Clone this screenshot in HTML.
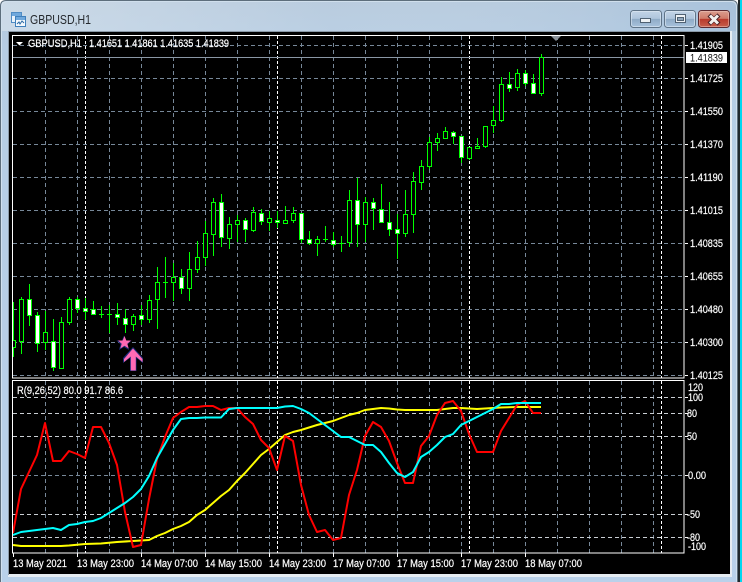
<!DOCTYPE html>
<html>
<head>
<meta charset="utf-8">
<title>GBPUSD,H1</title>
<style>
html,body{margin:0;padding:0;background:#fff;width:742px;height:582px;overflow:hidden}
svg{display:block}
text{font-family:"Liberation Sans",sans-serif;font-size:11px;fill:#fff;stroke:#fff;stroke-width:.2}
</style>
</head>
<body>
<svg width="742" height="582" viewBox="0 0 742 582" xmlns="http://www.w3.org/2000/svg">
<defs>
<linearGradient id="win" x1="0" y1="0" x2="0" y2="1"><stop offset="0" stop-color="#b4c8dc"/><stop offset=".08" stop-color="#b6cde4"/><stop offset="1" stop-color="#b9d1ea"/></linearGradient>
<linearGradient id="sheen" x1="0" y1="0" x2="1" y2="0"><stop offset="0" stop-color="#dfe8ef" stop-opacity=".55"/><stop offset=".45" stop-color="#dfe8ef" stop-opacity=".12"/><stop offset="1" stop-color="#9dbbd8" stop-opacity=".5"/></linearGradient>
<linearGradient id="btn" x1="0" y1="0" x2="0" y2="1"><stop offset="0" stop-color="#c3d5e7"/><stop offset=".48" stop-color="#aec5dc"/><stop offset=".5" stop-color="#8fabc6"/><stop offset="1" stop-color="#a9c4de"/></linearGradient>
<linearGradient id="cls" x1="0" y1="0" x2="0" y2="1"><stop offset="0" stop-color="#dba091"/><stop offset=".48" stop-color="#cf7a68"/><stop offset=".5" stop-color="#b8392b"/><stop offset="1" stop-color="#c8604d"/></linearGradient>
<clipPath id="mainclip"><rect x="13" y="36" width="671" height="342"/></clipPath>
</defs>

<!-- window chrome -->
<rect x="739" y="0" width="3" height="582" fill="#00d8f0"/>
<rect x="738" y="0" width="2" height="582" fill="#20282c"/>
<path d="M0 582V6Q0 1 6 1H732Q738 1 738 7V582Z" fill="url(#win)"/>
<rect x="2" y="2" width="734" height="29" fill="url(#sheen)"/>
<path d="M.5 582V6Q.5 .5 6 .5H732Q737.5 .5 737.5 7V582" fill="none" stroke="#5d6e7c"/>
<path d="M1.5 582V7Q1.5 1.5 7 1.5H731Q736.5 1.5 736.5 7V582" fill="none" stroke="#dce8f2" stroke-opacity=".7"/>
<rect x="8" y="31" width="724" height="546" fill="#e6ecf2"/>
<rect x="8" y="31" width="722" height="1" fill="#8b9aa8"/>
<rect x="8" y="31" width="1" height="544" fill="#8b9aa8"/>
<rect x="9" y="32" width="721" height="542" fill="#000"/>

<!-- title icon -->
<rect x="11.500" y="12.500" width="10" height="10" fill="#eaf3fb" stroke="#4f8cc4"/>
<rect x="12" y="13" width="9" height="3" fill="#6fa8dc"/>
<rect x="15.500" y="16.500" width="10" height="10" fill="#f4f9fd" stroke="#3f7fbb"/>
<rect x="16" y="17" width="9" height="3" fill="#6fa8dc"/>
<path d="M17 24l2-2 1 2 2-3 2 2" fill="none" stroke="#2c6aa4"/>
<text x="30" y="24" textLength="61" lengthAdjust="spacingAndGlyphs" style="font-size:13px;fill:#25292e;stroke:none">GBPUSD,H1</text>

<!-- window buttons -->
<rect x="630.500" y="10.500" width="31" height="17" rx="3" fill="url(#btn)" stroke="#5f7488"/>
<rect x="631.500" y="11.500" width="29" height="15" rx="2" fill="none" stroke="#e4edf5" stroke-opacity=".55"/>
<rect x="640.500" y="18.500" width="10" height="4" fill="#eef2f5" stroke="#4f6172"/>
<rect x="664.500" y="10.500" width="31" height="17" rx="3" fill="url(#btn)" stroke="#5f7488"/>
<rect x="665.500" y="11.500" width="29" height="15" rx="2" fill="none" stroke="#e4edf5" stroke-opacity=".55"/>
<rect x="675.500" y="14.500" width="10" height="8" fill="#eef2f5" stroke="#4f6172"/>
<rect x="677.500" y="17.500" width="6" height="3" fill="#8fa6bc" stroke="#4f6172"/>
<rect x="698.500" y="10.500" width="31" height="17" rx="3" fill="url(#cls)" stroke="#5c2a30"/>
<rect x="699.500" y="11.500" width="29" height="15" rx="2" fill="none" stroke="#efc9bf" stroke-opacity=".5"/>
<path d="M709 15l10 9M719 15l-10 9" fill="none" stroke="#4a2226" stroke-width="4.500"/>
<path d="M710 15.500l8 8M718 15.500l-8 8" fill="none" stroke="#f3f1ef" stroke-width="3"/>

<!-- main grid -->
<g fill="none" stroke="#778899" stroke-dasharray="4 3" shape-rendering="crispEdges">
<path d="M13 45.500H684M13 78.500H684M13 111.500H684M13 144.500H684M13 177.500H684M13 210.500H684M13 243.500H684M13 276.500H684M13 309.500H684M13 342.500H684M13 375.500H684"/>
<path d="M45.500 36V378M77.500 36V378M109.500 36V378M141.500 36V378M173.500 36V378M205.500 36V378M237.500 36V378M301.500 36V378M333.500 36V378M365.500 36V378M397.500 36V378M429.500 36V378M493.500 36V378M525.500 36V378M557.500 36V378M589.500 36V378M621.500 36V378M653.500 36V378M269.500 36V378M461.500 36V378"/>
<path d="M45.500 381V553M77.500 381V553M109.500 381V553M141.500 381V553M173.500 381V553M205.500 381V553M237.500 381V553M301.500 381V553M333.500 381V553M365.500 381V553M397.500 381V553M429.500 381V553M493.500 381V553M525.500 381V553M557.500 381V553M589.500 381V553M621.500 381V553M653.500 381V553M269.500 381V553M461.500 381V553"/>
<path d="M13 475.500H684"/>
</g>
<g fill="none" shape-rendering="crispEdges">
<path stroke="#fff" stroke-dasharray="3 2" d="M85.500 36V378M277.500 36V378M469.500 36V378M661.500 36V378M85.500 381V553M277.500 381V553M469.500 381V553M661.500 381V553"/>
<path stroke="#c9ced3" stroke-dasharray="4 3" d="M13 397.500H684M13 413.500H684M13 436.500H684M13 514.500H684M13 537.500H684"/>
<path stroke="#8a97a5" d="M13 57.500H684"/>
</g>

<!-- candles -->
<g clip-path="url(#mainclip)">
<path fill="none" stroke="#00ff00" d="M13.500 302V357M21.500 297V354M29.500 284V326M37.500 312V352M45.500 311V350M53.500 319V371M61.500 317V369M69.500 297V325M77.500 297V313M85.500 298V320M93.500 301V315M101.500 306V318M99 314.500h5M109.500 305V333M107 314.500h5M117.500 303V325M125.500 309V333M133.500 314V331M141.500 305V325M149.500 295V323M157.500 267V329M165.500 257V298M163 282.500h5M173.500 263V301M181.500 269V294M189.500 252V301M197.500 241V273M205.500 221V266M213.500 198V256M221.500 194V247M229.500 217V249M237.500 215V242M245.500 218V242M253.500 207V232M261.500 209V225M269.500 211V231M277.500 211V228M285.500 206V223M293.500 207V223M301.500 213V243M309.500 231V245M317.500 236V256M325.500 226V242M323 239.500h5M333.500 232V247M341.500 236V252M339 243.500h5M349.500 190V247M357.500 178V247M365.500 197V242M373.500 198V230M381.500 184V223M389.500 202V236M397.500 214V259M405.500 190V237M413.500 172V233M421.500 160V190M429.500 137V169M437.500 133V151M445.500 127V139M453.500 131V144M461.500 136V163M469.500 147V160M477.500 138V149M485.500 126V148M493.500 106V133M501.500 77V122M509.500 72V92M517.500 69V91M525.500 70V86M533.500 74V93M541.500 54V96"/>
<g fill="#000" stroke="#00ff00">
<rect x="11.500" y="340.500" width="4" height="7"/>
<rect x="19.500" y="299.500" width="4" height="42"/>
<rect x="43.500" y="332.500" width="4" height="10"/>
<rect x="59.500" y="322.500" width="4" height="46"/>
<rect x="67.500" y="299.500" width="4" height="23"/>
<rect x="131.500" y="316.500" width="4" height="8"/>
<rect x="147.500" y="300.500" width="4" height="19"/>
<rect x="155.500" y="282.500" width="4" height="17"/>
<rect x="171.500" y="277.500" width="4" height="5"/>
<rect x="187.500" y="269.500" width="4" height="19"/>
<rect x="195.500" y="257.500" width="4" height="12"/>
<rect x="203.500" y="233.500" width="4" height="24"/>
<rect x="211.500" y="202.500" width="4" height="32"/>
<rect x="227.500" y="224.500" width="4" height="14"/>
<rect x="235.500" y="220.500" width="4" height="4"/>
<rect x="251.500" y="212.500" width="4" height="18"/>
<rect x="267.500" y="218.500" width="4" height="4"/>
<rect x="283.500" y="220.500" width="4" height="3"/>
<rect x="291.500" y="213.500" width="4" height="7"/>
<rect x="315.500" y="239.500" width="4" height="4"/>
<rect x="347.500" y="200.500" width="4" height="42"/>
<rect x="363.500" y="202.500" width="4" height="22"/>
<rect x="403.500" y="214.500" width="4" height="19"/>
<rect x="411.500" y="181.500" width="4" height="33"/>
<rect x="419.500" y="166.500" width="4" height="16"/>
<rect x="427.500" y="142.500" width="4" height="24"/>
<rect x="435.500" y="138.500" width="4" height="4"/>
<rect x="443.500" y="131.500" width="4" height="7"/>
<rect x="467.500" y="147.500" width="4" height="11"/>
<rect x="475.500" y="146.500" width="4" height="2"/>
<rect x="483.500" y="126.500" width="4" height="20"/>
<rect x="491.500" y="120.500" width="4" height="5"/>
<rect x="499.500" y="84.500" width="4" height="36"/>
<rect x="515.500" y="73.500" width="4" height="14"/>
<rect x="539.500" y="57.500" width="4" height="36"/>
</g>
<g fill="#fff" stroke="#00ff00">
<rect x="27.500" y="299.500" width="4" height="16"/>
<rect x="35.500" y="315.500" width="4" height="28"/>
<rect x="51.500" y="341.500" width="4" height="26"/>
<rect x="75.500" y="299.500" width="4" height="9"/>
<rect x="83.500" y="308.500" width="4" height="3"/>
<rect x="91.500" y="309.500" width="4" height="5"/>
<rect x="115.500" y="314.500" width="4" height="3"/>
<rect x="123.500" y="318.500" width="4" height="6"/>
<rect x="139.500" y="315.500" width="4" height="4"/>
<rect x="179.500" y="277.500" width="4" height="11"/>
<rect x="219.500" y="202.500" width="4" height="35"/>
<rect x="243.500" y="220.500" width="4" height="9"/>
<rect x="259.500" y="213.500" width="4" height="8"/>
<rect x="275.500" y="220.500" width="4" height="2"/>
<rect x="299.500" y="213.500" width="4" height="26"/>
<rect x="307.500" y="239.500" width="4" height="4"/>
<rect x="331.500" y="240.500" width="4" height="4"/>
<rect x="355.500" y="200.500" width="4" height="24"/>
<rect x="371.500" y="202.500" width="4" height="6"/>
<rect x="379.500" y="209.500" width="4" height="13"/>
<rect x="387.500" y="222.500" width="4" height="7"/>
<rect x="395.500" y="229.500" width="4" height="4"/>
<rect x="451.500" y="132.500" width="4" height="4"/>
<rect x="459.500" y="136.500" width="4" height="21"/>
<rect x="507.500" y="84.500" width="4" height="4"/>
<rect x="523.500" y="73.500" width="4" height="10"/>
<rect x="531.500" y="83.500" width="4" height="10"/>
</g>
</g>

<!-- star and arrow -->
<polygon points="124.500,335 126.500,340 132,340 128,344 129.500,349.500 124.500,346.500 119.500,349.500 121,344 117,340 122.500,340" fill="#1c2a78" transform="translate(-.5 .5)"/>
<polygon points="124.500,336 126.300,340.500 131,340.500 127.300,343.700 128.700,348.500 124.500,345.800 120.300,348.500 121.700,343.700 118,340.500 122.700,340.500" fill="#ff69b4"/>
<polygon points="133,347 143,358 143,363 136.500,358 136.500,371 130,371 130,358 123,363 123,358" fill="#1c2a78"/>
<polygon points="133,348.500 142.500,359 142.500,362 135.800,356.500 135.800,370.500 130.800,370.500 130.800,356.500 124,362 124,359" fill="#ff69b4"/>

<!-- top marker -->
<polygon points="551,36 561,36 556,41" fill="#8a929a"/>

<!-- indicator lines -->
<g fill="none" stroke-width="2" stroke-linejoin="round">
<polyline stroke="#ffff00" points="13,545 21,546 61,546 69,545.500 85,544 101,543.500 117,542 133,541 149,540 157,536 165,533 173,529 181,526 189,522 197,515 205,510 213,503 221,496 229,490 237,481 245,473 253,464 261,455 269,449 277,442 285,435 293,432 301,430 309,427.500 317,425 325,423 333,421 341,418 349,415 357,413 365,410 373,409 381,408 389,408.500 397,409.500 405,410 437,410 445,409 453,408 461,408 469,408.500 477,409 485,408.500 493,408 501,407.500 517,407 541,407"/>
<polyline stroke="#ff0000" points="13,533 21,489 29,472 37,455 45,423 53,461 61,461 69,451 77,454 85,458 93,427 101,427 109,443 117,465 125,512 133,547 141,545 149,499 157,459 165,437 173,418 181,412 189,407 197,407 205,406 213,406 221,410 229,408 237,408 245,417 253,424 261,440 269,448 277,470 285,436 293,441 301,485 309,515 317,532 325,530 333,540 341,538 349,495 357,470 365,436 373,422 381,427 389,441 397,463 405,483 413,483 421,446 429,436 437,415 445,403 453,401 461,411 469,434 477,452 493,452 501,431 509,418 517,405 525,401 533,413 541,413"/>
<polyline stroke="#00ffff" points="13,535 21,532 29,531 37,530 45,529 53,528 61,530 69,525 77,524 85,522 93,521 101,518 109,513 117,508 125,503 133,497 141,489 149,476 157,458 165,444 173,430 181,419 189,418 197,418 205,417.500 221,417.500 229,409 237,408 277,408 285,406.500 293,406 301,409 309,413 317,419 325,425 333,431 341,437 349,437 357,441 365,445 373,445 381,452 389,463 397,473 405,477 413,472 421,457 429,452 437,445 445,437 453,434 461,425 469,421 477,417 485,413 493,409 501,404 509,404 517,403 541,403"/>
</g>

<!-- frames -->
<g fill="none" stroke="#fff" shape-rendering="crispEdges">
<rect x="12.500" y="35.500" width="671.500" height="342.500"/>
<rect x="12.500" y="380.500" width="671.500" height="172.500"/>
<path d="M685 45.500h3M685 78.500h3M685 111.500h3M685 144.500h3M685 177.500h3M685 210.500h3M685 243.500h3M685 276.500h3M685 309.500h3M685 342.500h3M685 375.500h3"/>
<path d="M685 397.500h3M685 413.500h3M685 436.500h3M685 475.500h3M685 514.500h3M685 537.500h3"/>
<path d="M13.500 553v4M77.500 553v4M141.500 553v4M205.500 553v4M269.500 553v4M333.500 553v4M397.500 553v4M461.500 553v4M525.500 553v4"/>
</g>

<!-- chart heading -->
<polygon points="16,42 23,42 19.500,45.500" fill="#fff"/>
<text x="28" y="47" textLength="54" lengthAdjust="spacingAndGlyphs">GBPUSD,H1</text>
<text x="89" y="47" textLength="140" lengthAdjust="spacingAndGlyphs">1.41651 1.41861 1.41635 1.41839</text>
<text x="17" y="394" textLength="106" lengthAdjust="spacingAndGlyphs">R(9,26,52) 80.0 91.7 86.6</text>

<!-- price axis -->
<g>
<text x="690" y="49" textLength="33" lengthAdjust="spacingAndGlyphs">1.41905</text>
<text x="690" y="82" textLength="33" lengthAdjust="spacingAndGlyphs">1.41725</text>
<text x="690" y="115" textLength="33" lengthAdjust="spacingAndGlyphs">1.41550</text>
<text x="690" y="148" textLength="33" lengthAdjust="spacingAndGlyphs">1.41370</text>
<text x="690" y="181" textLength="33" lengthAdjust="spacingAndGlyphs">1.41190</text>
<text x="690" y="214" textLength="33" lengthAdjust="spacingAndGlyphs">1.41015</text>
<text x="690" y="247" textLength="33" lengthAdjust="spacingAndGlyphs">1.40835</text>
<text x="690" y="280" textLength="33" lengthAdjust="spacingAndGlyphs">1.40655</text>
<text x="690" y="313" textLength="33" lengthAdjust="spacingAndGlyphs">1.40480</text>
<text x="690" y="346" textLength="33" lengthAdjust="spacingAndGlyphs">1.40300</text>
<text x="690" y="379" textLength="33" lengthAdjust="spacingAndGlyphs">1.40125</text>
</g>
<rect x="686" y="52" width="41" height="11" fill="#fff"/>
<text x="690" y="61.500" textLength="33" lengthAdjust="spacingAndGlyphs" style="fill:#111;stroke:none">1.41839</text>

<!-- indicator axis -->
<g>
<text x="688" y="391" textLength="15" lengthAdjust="spacingAndGlyphs">120</text>
<text x="688" y="401" textLength="15" lengthAdjust="spacingAndGlyphs">100</text>
<text x="687" y="417" textLength="10" lengthAdjust="spacingAndGlyphs">80</text>
<text x="687" y="440" textLength="10" lengthAdjust="spacingAndGlyphs">50</text>
<text x="688" y="479" textLength="18" lengthAdjust="spacingAndGlyphs">0.00</text>
<text x="687" y="518" textLength="13" lengthAdjust="spacingAndGlyphs">-50</text>
<text x="687" y="541" textLength="13" lengthAdjust="spacingAndGlyphs">-80</text>
<text x="688" y="550" textLength="18" lengthAdjust="spacingAndGlyphs">-100</text>
</g>

<!-- time axis -->
<g>
<text x="13" y="567" textLength="54" lengthAdjust="spacingAndGlyphs">13 May 2021</text>
<text x="77" y="567" textLength="57" lengthAdjust="spacingAndGlyphs">13 May 23:00</text>
<text x="141" y="567" textLength="57" lengthAdjust="spacingAndGlyphs">14 May 07:00</text>
<text x="205" y="567" textLength="57" lengthAdjust="spacingAndGlyphs">14 May 15:00</text>
<text x="269" y="567" textLength="57" lengthAdjust="spacingAndGlyphs">14 May 23:00</text>
<text x="333" y="567" textLength="57" lengthAdjust="spacingAndGlyphs">17 May 07:00</text>
<text x="397" y="567" textLength="57" lengthAdjust="spacingAndGlyphs">17 May 15:00</text>
<text x="461" y="567" textLength="57" lengthAdjust="spacingAndGlyphs">17 May 23:00</text>
<text x="525" y="567" textLength="57" lengthAdjust="spacingAndGlyphs">18 May 07:00</text>
</g>
</svg>
</body>
</html>
